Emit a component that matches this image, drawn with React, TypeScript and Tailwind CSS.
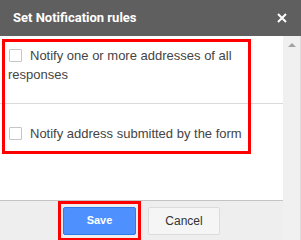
export default function App() {
  return (
    <div className="w-[301px] h-[240px] flex flex-col overflow-hidden bg-white">
      <div className="h-[36px] shrink-0 bg-[#5f5f5f] flex items-center justify-between pl-[13px] pr-[14px]">
        <span className="text-white font-bold text-[13px] font-['Roboto',sans-serif]">Set Notification rules</span>
        <svg width="10" height="10" viewBox="0 0 10 10" className="block">
          <path d="M1 1L9 9M9 1L1 9" stroke="#fff" strokeWidth="2" />
        </svg>
      </div>
      <div className="flex flex-1 min-h-0">
        <div className="w-[283px] flex flex-col">
          <div className="relative flex-1 bg-white font-['Liberation_Sans',Arial,sans-serif] text-[13px] leading-[19px] text-[#444]">
            <div className="h-[68px] pt-[10px] pl-[8px] pr-[30px] border-b border-[#dadada]">
              <span className="inline-block w-[13px] h-[13px] border border-[#c6c6c6] rounded-[1px] bg-white align-[-2px] ml-[1px] mr-[8px]" />
              Notify one or more addresses of all responses
            </div>
            <div className="pt-[20px] pl-[8px]">
              <span className="inline-block w-[13px] h-[13px] border border-[#c6c6c6] rounded-[1px] bg-white align-[-2px] ml-[1px] mr-[8px]" />
              Notify address submitted by the form
            </div>
            <div className="absolute left-[2px] top-[3px] w-[249px] h-[115px] border-[3px] border-[#ff0000]" />
          </div>
          <div className="relative h-[40px] shrink-0 bg-[#eeeeee] border-t border-[#c4c4c4] flex items-center justify-center gap-[12px] font-['Liberation_Sans',Arial,sans-serif]">
            <button className="w-[73px] h-[28px] rounded-[2px] bg-[#4d90fe] border border-[#3079ed] text-white text-[11px] font-bold">Save</button>
            <button className="w-[72px] h-[28px] rounded-[2px] bg-[#f5f5f5] border border-[#dcdcdc] text-[#333] text-[12px]">Cancel</button>
            <div className="absolute left-[58px] top-0 w-[83px] h-[40px] border-[3px] border-[#ff0000]" />
          </div>
        </div>
        <div className="w-[17px] bg-[#f0f0f0] flex justify-center pt-[7px]">
          <div className="w-0 h-0 border-l-[4px] border-r-[4px] border-b-[4px] border-l-transparent border-r-transparent border-b-[#a3a3a3]" />
        </div>
        <div className="w-[1px] bg-[#dcdcdc]" />
      </div>
    </div>
  );
}
